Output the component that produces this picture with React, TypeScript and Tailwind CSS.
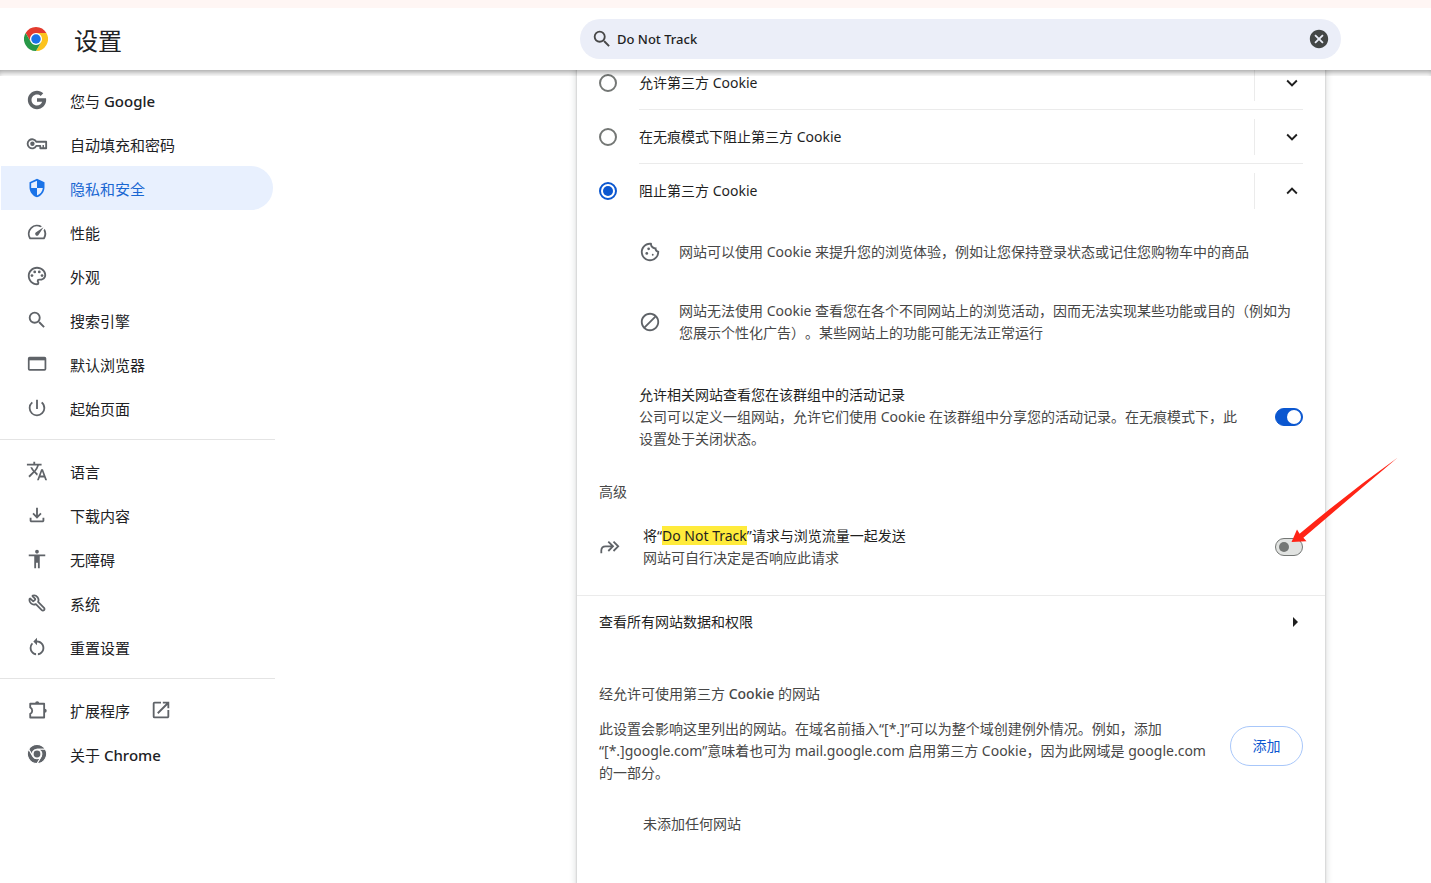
import React, { useState } from 'react';
import { Wrench } from 'lucide-react';
import {
  MdAccessibility,
  MdArrowRight,
  MdBlock,
  MdCancel,
  MdExpandLess,
  MdExpandMore,
  MdOpenInNew,
  MdOutlineCookie,
  MdOutlineFileDownload,
  MdOutlinePalette,
  MdOutlineSpeed,
  MdPowerSettingsNew,
  MdRestartAlt,
  MdSearch,
  MdSecurity,
  MdTranslate,
} from 'react-icons/md';

const RED_ARC =
  'M24,12H44.7812a23.9939,23.9939,0,0,0-41.5639.0029L13.6079,30l.0093-.0024A11.9852,11.9852,0,0,1,24,12Z';
const YELLOW_ARC =
  'M34.3913,30.0029,24.0007,48A23.994,23.994,0,0,0,44.78,12.0031H23.9989l-.0025.0093A11.985,11.985,0,0,1,34.3913,30.0029Z';
const GREEN_ARC =
  'M13.6086,30.0031,3.218,12.006A23.994,23.994,0,0,0,24.0025,48L34.3931,30.0029l-.0067-.0068a11.9852,11.9852,0,0,1-20.7778.007Z';

function ChromeLogo() {
  return (
    <svg viewBox="0 0 48 48" className="size-6 shrink-0" aria-hidden="true">
      <circle cx="24" cy="24" r="12" fill="#fff" />
      <path d={RED_ARC} fill="#e33b2e" />
      <path d={YELLOW_ARC} fill="#fcc31e" />
      <path d={GREEN_ARC} fill="#279847" />
      <circle cx="24" cy="24" r="9.5" fill="#1a73e8" />
    </svg>
  );
}

function ChromeMono() {
  return (
    <svg viewBox="-1 -1 50 50" className="size-5" aria-hidden="true">
      <g fill="currentColor" stroke="#fff" strokeWidth="2.6">
        <path d={RED_ARC} />
        <path d={YELLOW_ARC} />
        <path d={GREEN_ARC} />
      </g>
      <circle cx="24" cy="24" r="8.5" fill="currentColor" />
    </svg>
  );
}

function GoogleG() {
  return (
    <svg viewBox="0 0 48 48" className="size-[22px]" fill="currentColor" aria-hidden="true">
      <path d="M43.611,20.083H42V20H24v8h11.303c-1.649,4.657-6.08,8-11.303,8c-6.627,0-12-5.373-12-12c0-6.627,5.373-12,12-12c3.059,0,5.842,1.154,7.961,3.039l5.657-5.657C34.046,6.053,29.268,4,24,4C12.955,4,4,12.955,4,24c0,11.045,8.955,20,20,20c11.045,0,20-8.955,20-20C44,22.659,43.862,21.35,43.611,20.083z" />
    </svg>
  );
}

function KeyIcon() {
  return (
    <svg viewBox="0 0 24 24" className="size-[22px]" fill="none" stroke="currentColor" strokeWidth="2" aria-hidden="true">
      <path d="M11.2 9.5A5 5 0 1 0 11.2 14.1H15.6V16.6H22V9.5z" strokeLinejoin="round" />
      <circle cx="7" cy="11.8" r="2.4" fill="currentColor" stroke="none" />
      <path d="M18.8 13v3.6" strokeWidth="1.6" />
    </svg>
  );
}

function WindowIcon() {
  return (
    <svg viewBox="0 0 24 24" className="size-[22px]" fill="none" stroke="currentColor" strokeWidth="1.9" aria-hidden="true">
      <rect x="3" y="5" width="18.2" height="13.4" rx="1" />
      <path d="M3 6.6H21.2" strokeWidth="2.8" />
    </svg>
  );
}

function PuzzleIcon() {
  return (
    <svg viewBox="0 0 24 24" className="size-[22px]" fill="none" stroke="currentColor" strokeWidth="2" aria-hidden="true">
      <path d="M4.6 5.2H19.8V20.2H4.6V16.2A3.9 3.9 0 0 0 4.6 9.2z" strokeLinejoin="round" />
      <path d="M10 4.6a2.2 2.2 0 0 1 4.4 0zM20.4 10.6a2.2 2.2 0 0 1 0 4.4z" fill="currentColor" stroke="none" />
    </svg>
  );
}

function ForwardIcon() {
  return (
    <svg viewBox="0 0 22 22" className="size-[22px] shrink-0 text-[#5f6368]" fill="none" stroke="currentColor" strokeWidth="1.8" aria-hidden="true">
      <path d="M2.3 17.3V14.6Q2.3 10.3 6.6 10.3H13.6M9.3 5.6L14 10.3L9.3 15M14.5 5.6L19.2 10.3L14.5 15" />
    </svg>
  );
}

type Item = { label: React.ReactNode; icon: React.ReactNode; active?: boolean; external?: boolean };

const icon = 'size-[22px]';

const groups: Item[][] = [
  [
    { label: <>您与 <span className="font-medium">Google</span></>, icon: <GoogleG /> },
    { label: '自动填充和密码', icon: <KeyIcon /> },
    { label: '隐私和安全', icon: <MdSecurity className="size-5" />, active: true },
    { label: '性能', icon: <MdOutlineSpeed className={icon} /> },
    { label: '外观', icon: <MdOutlinePalette className={icon} /> },
    { label: '搜索引擎', icon: <MdSearch className={icon} /> },
    { label: '默认浏览器', icon: <WindowIcon /> },
    { label: '起始页面', icon: <MdPowerSettingsNew className={icon} /> },
  ],
  [
    { label: '语言', icon: <MdTranslate className={icon} /> },
    { label: '下载内容', icon: <MdOutlineFileDownload className={icon} /> },
    { label: '无障碍', icon: <MdAccessibility className={icon} /> },
    { label: '系统', icon: <Wrench className="size-[18px] -scale-x-100" strokeWidth={2.4} /> },
    { label: '重置设置', icon: <MdRestartAlt className={icon} /> },
  ],
  [
    { label: '扩展程序', icon: <PuzzleIcon />, external: true },
    { label: <>关于 <span className="font-medium">Chrome</span></>, icon: <ChromeMono /> },
  ],
];

function Sidebar() {
  return (
    <nav className="w-[275px] shrink-0 pt-2" aria-label="设置">
      {groups.map((items, g) => (
        <ul key={g} className={g > 0 ? 'mt-[9px] border-t border-[#e4e4e4] pt-[9px]' : ''}>
          {items.map((item, i) => (
            <li key={i}>
              <a
                href="#"
                className={`mr-0.5 ml-px flex h-11 items-center gap-5 rounded-r-full pl-[25px] text-[15px] leading-6 ${
                  item.active ? 'bg-[#e8f0fe] text-[#1967d2]' : 'text-[#202124]'
                }`}
              >
                <span
                  className={`mr-0.5 flex size-[22px] shrink-0 items-center justify-center ${
                    item.active ? 'text-[#1a73e8]' : 'text-[#5f6368]'
                  }`}
                >
                  {item.icon}
                </span>
                <span className="pt-px">{item.label}</span>
                {item.external && <MdOpenInNew className="size-[22px] text-[#5f6368]" />}
              </a>
            </li>
          ))}
        </ul>
      ))}
    </nav>
  );
}

function Toggle({ id, checked, onChange }: { id: string; checked: boolean; onChange: (v: boolean) => void }) {
  return (
    <input
      id={id}
      type="checkbox"
      role="switch"
      checked={checked}
      onChange={(e) => onChange(e.target.checked)}
      className="flex h-[18px] w-7 shrink-0 cursor-pointer appearance-none items-center rounded-full border border-[#747775] bg-[#e1e3e1] px-[3px] before:size-[10px] before:rounded-full before:bg-[#747775] checked:justify-end checked:border-[#0b57d0] checked:bg-[#0b57d0] checked:px-px checked:before:size-[14px] checked:before:bg-white"
    />
  );
}

const options = ['允许第三方 Cookie', '在无痕模式下阻止第三方 Cookie', '阻止第三方 Cookie'];

function CookieOptions() {
  const [selected, setSelected] = useState(2);
  return (
    <fieldset>
      {options.map((label, i) => (
        <div key={label} className="flex items-center gap-[22px]">
          <input
            type="radio"
            id={`cookie-${i}`}
            name="cookie"
            checked={selected === i}
            onChange={() => setSelected(i)}
            className="flex size-[18px] shrink-0 appearance-none items-center justify-center rounded-full border-2 border-[#747775] checked:border-[#0b57d0] checked:before:size-[10px] checked:before:rounded-full checked:before:bg-[#0b57d0]"
          />
          <div className={`flex flex-1 items-center ${i < 2 ? 'h-[54px] border-b border-[#ebebeb]' : 'h-[53px]'}`}>
            <label htmlFor={`cookie-${i}`} className="flex-1 text-[#1f1f1f]">
              {label}
            </label>
            <div className="flex h-9 items-center border-l border-[#ebebeb] pl-[26px]">
              <button type="button" aria-label={i === 2 ? '收起' : '展开'} className="text-[#1f1f1f]">
                {i === 2 ? <MdExpandLess className={icon} /> : <MdExpandMore className={icon} />}
              </button>
            </div>
          </div>
        </div>
      ))}
    </fieldset>
  );
}

export default function App() {
  const [query, setQuery] = useState('Do Not Track');
  const [related, setRelated] = useState(true);
  const [dnt, setDnt] = useState(false);

  return (
    <div className="flex min-h-screen flex-col bg-white font-['Noto_Sans','Noto_Sans_CJK_SC',sans-serif] text-[14px] leading-[22px] text-[#474747] [text-spacing-trim:space-all]">
      <div className="h-2 bg-[#fff6f4]" />
      <header className="relative z-10 flex h-[62px] items-center bg-white pr-[90px] pl-6">
        <ChromeLogo />
        <h1 className="ml-[26px] shrink-0 pt-1 text-[24px] leading-8 text-[#202124]">设置</h1>
        <div className="ml-auto flex h-10 w-full max-w-[761px] items-center gap-1 rounded-full bg-[#ebeef8] px-[11px]">
          <MdSearch className="size-[22px] shrink-0 text-[#474747]" />
          <input
            type="text"
            aria-label="在设置中搜索"
            value={query}
            onChange={(e) => setQuery(e.target.value)}
            className="min-w-0 flex-1 bg-transparent text-[13px] font-medium text-[#1f1f1f] outline-none"
          />
          <button type="button" aria-label="清除搜索内容" onClick={() => setQuery('')} className="text-[#444746]">
            <MdCancel className="size-[22px]" />
          </button>
        </div>
        <div className="pointer-events-none absolute inset-x-0 top-full h-1.5 shadow-[inset_0_5px_6px_-3px_rgba(0,0,0,0.4)]" />
      </header>

      <div className="flex flex-1 pr-[106px]">
        <Sidebar />
        <main className="-mt-3.5 ml-auto w-full max-w-[748px] bg-white shadow-[0_1px_2px_0_rgba(60,64,67,0.3),0_2px_6px_2px_rgba(60,64,67,0.15)]">
          <section className="px-[22px]">
            <CookieOptions />

            <div className="flex flex-col gap-[37px] pt-6 pl-10">
              <div className="flex items-center gap-[18px]">
                <MdOutlineCookie className="size-[22px] shrink-0 text-[#5f6368]" />
                <p>网站可以使用 Cookie 来提升您的浏览体验，例如让您保持登录状态或记住您购物车中的商品</p>
              </div>
              <div className="flex items-center gap-[18px]">
                <MdBlock className="size-[22px] shrink-0 text-[#5f6368]" />
                <p className="pr-2">
                  网站无法使用 Cookie 查看您在各个不同网站上的浏览活动，因而无法实现某些功能或目的（例如为您展示个性化广告）。某些网站上的功能可能无法正常运行
                </p>
              </div>
            </div>

            <div className="flex items-center gap-8 pt-10 pl-10">
              <label htmlFor="related" className="flex-1">
                <span className="block text-[#1f1f1f]">允许相关网站查看您在该群组中的活动记录</span>
                <span className="block">
                  公司可以定义一组网站，允许它们使用 Cookie 在该群组中分享您的活动记录。在无痕模式下，此设置处于关闭状态。
                </span>
              </label>
              <Toggle id="related" checked={related} onChange={setRelated} />
            </div>

            <h2 className="pt-[31px]">高级</h2>
            <div className="flex items-center gap-[22px] pt-[22px] pb-[26px]">
              <ForwardIcon />
              <label htmlFor="dnt" className="flex-1">
                <span className="block text-[#1f1f1f]">
                  将“<mark className="bg-[#ffeb3b] text-[#1f1f1f]">Do Not Track</mark>”请求与浏览流量一起发送
                </span>
                <span className="block">网站可自行决定是否响应此请求</span>
              </label>
              <div className="relative">
                <Toggle id="dnt" checked={dnt} onChange={setDnt} />
                <svg
                  viewBox="0 0 108 86"
                  className="pointer-events-none absolute bottom-[13px] left-4 h-[86px] w-[108px] max-w-none"
                  fill="#ff2416"
                  aria-hidden="true"
                >
                  <path d="M0.5 85L6 72.5L8.6 76.8Q57 36 106.5 0.8Q60 40 12.4 80.8L15.5 84.2Z" />
                </svg>
              </div>
            </div>
          </section>

          <button
            type="button"
            className="flex h-[53px] w-full items-center justify-between border-t border-[#ebebeb] pr-[18px] pl-[22px] text-left text-[#1f1f1f]"
          >
            查看所有网站数据和权限
            <MdArrowRight className="size-6" />
          </button>

          <section className="px-[22px] pt-[35px] pb-8">
            <h2>
              经允许可使用第三方 <span className="font-medium">Cookie</span> 的网站
            </h2>
            <div className="flex items-start gap-6 pt-[13px]">
              <p className="flex-1">
                此设置会影响这里列出的网站。在域名前插入“[*.]”可以为整个域创建例外情况。例如，添加
                <wbr />
                “[*.]google.com”意味着也可为 mail.google.com 启用第三方 Cookie，因为此网域是 google.com 的一部分。
              </p>
              <button
                type="button"
                className="mt-2 h-10 w-[73px] shrink-0 rounded-full border border-[#a8c7fa] text-[#0b57d0]"
              >
                添加
              </button>
            </div>
            <p className="pt-[29px] pl-11">未添加任何网站</p>
          </section>
        </main>
      </div>
    </div>
  );
}
